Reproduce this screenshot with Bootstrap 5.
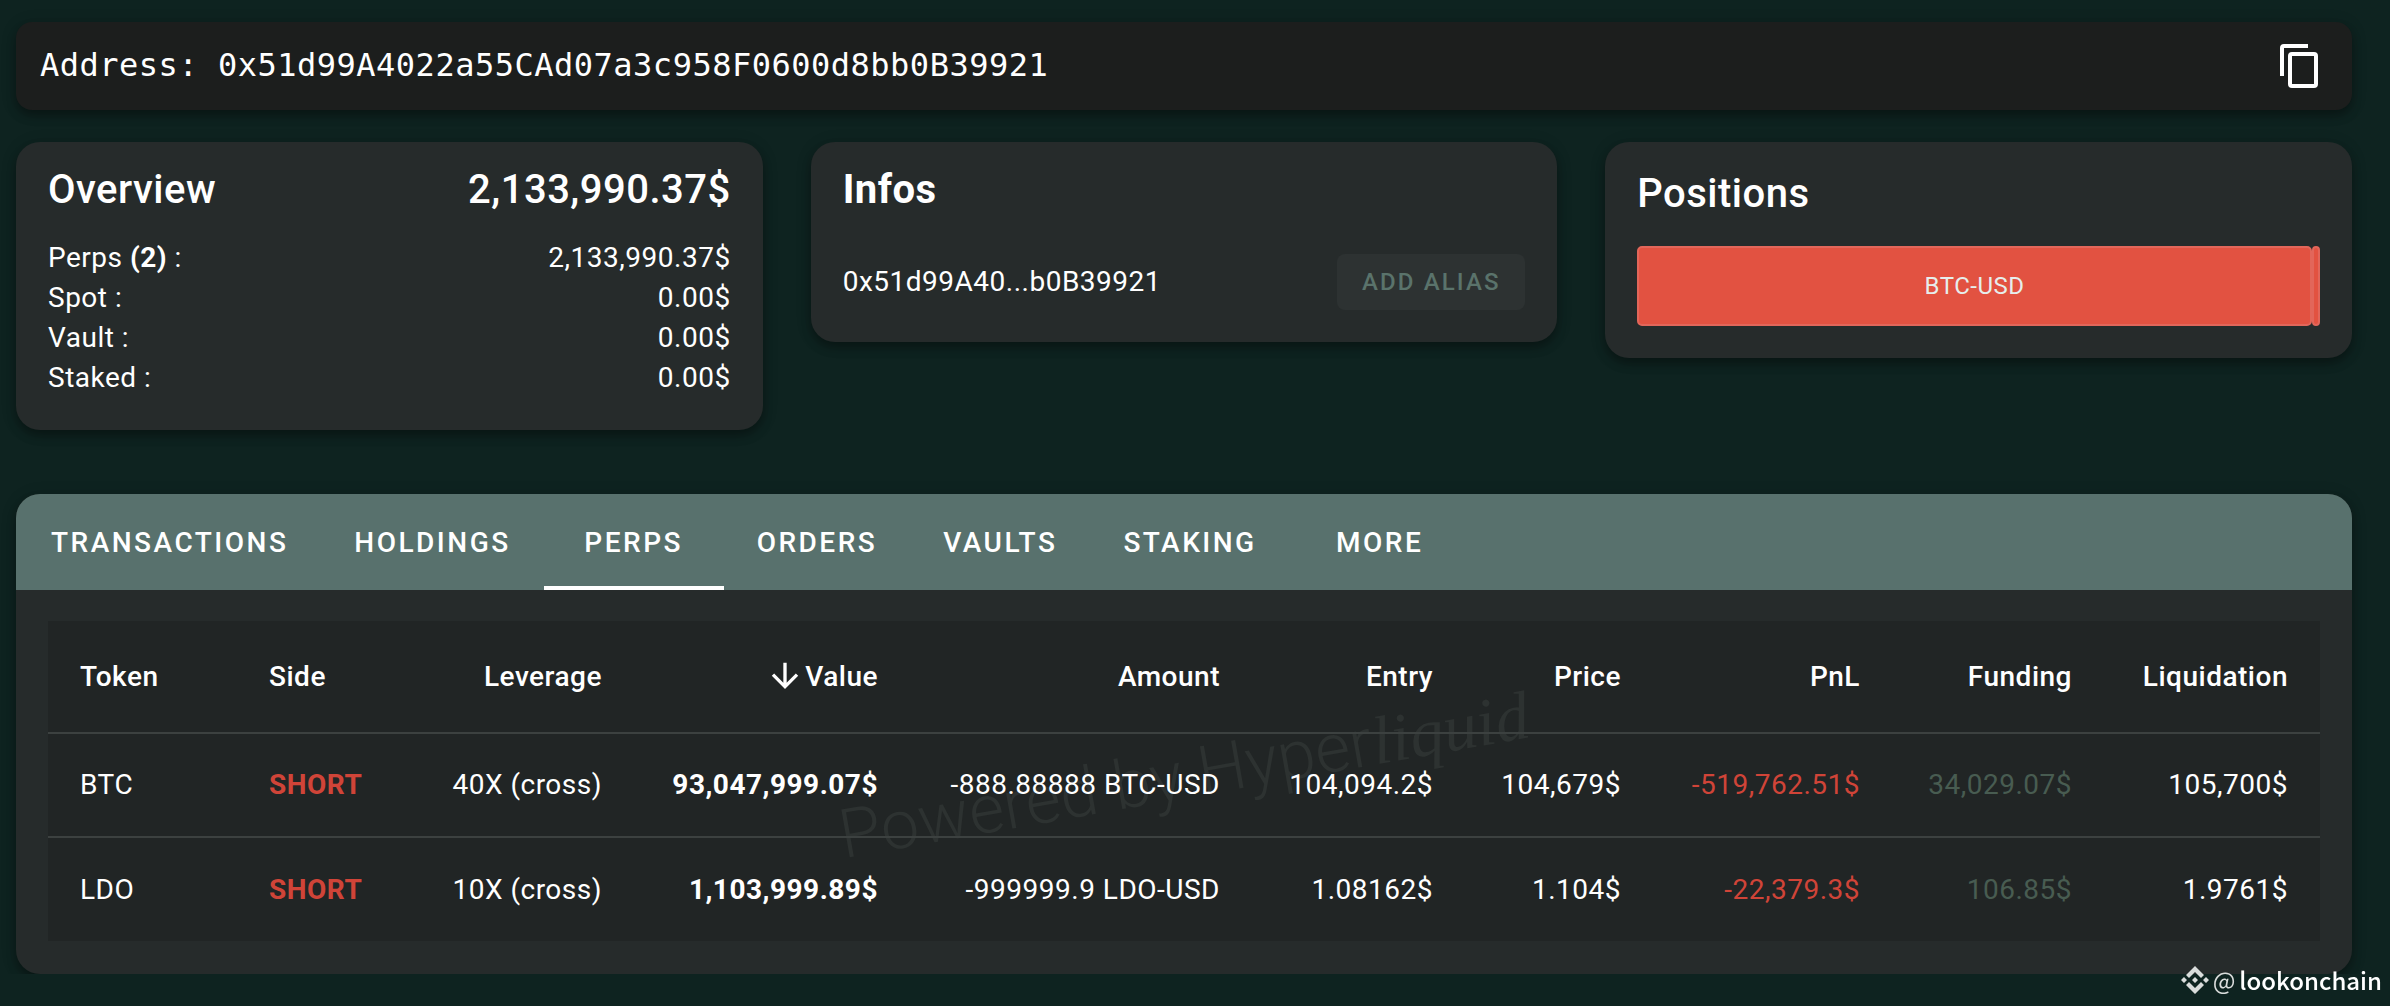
<!DOCTYPE html>
<html lang="en" data-bs-theme="dark">
<head>
<meta charset="utf-8">
<meta name="viewport" content="width=device-width, initial-scale=1">
<title>Address overview</title>
<link href="https://cdn.jsdelivr.net/npm/bootstrap@5.3.0/dist/css/bootstrap.min.css" rel="stylesheet">
<style>
  body { background: #0e2320; color: #fff; font-family: Roboto, "Liberation Sans", sans-serif; font-size: 28px; line-height: 40px; letter-spacing: .018em; }
  .page { padding: 22px 38px 0 16px; }
  .raised { box-shadow: 0 6px 10px rgba(0,0,0,.28), 0 2px 16px rgba(0,0,0,.16); }
  .address-bar { background: #1c1e1d; border-radius: 16px; height: 88px; padding: 0 28px 0 24px; margin-bottom: 32px; }
  .address-text { font-family: "DejaVu Sans Mono", monospace; font-size: 32px; padding-bottom: 2px; }
  .copy-btn { color: #fff; line-height: 1; }
  .icon-48 { width: 48px; height: 48px; }
  .summary { display: grid; grid-template-columns: repeat(3, 1fr); gap: 48px; align-items: start; min-height: 352px; }
  .panel { background: #262b2b; border-radius: 24px; }
  .tile { padding: 16px 32px 32px; }
  .tile-title { font-size: 40px; line-height: 64px; letter-spacing: .012em; font-weight: 500; margin: 0; }
  .alias-btn { background: #2d3232; color: #5a736b; border: 0; border-radius: 8px; height: 56px; width: 188px; font-size: 24px; font-weight: 500; letter-spacing: .089em; padding: 0; }
  .pos-bar { height: 80px; margin-top: 20px; }
  .pos-part { background: #e25241; border: 2px solid #e2665a; border-radius: 5px; font-size: 24px; color: #e6eeec; min-width: 0; overflow: hidden; }
  .tabs { background: #58716d; border-radius: 24px 24px 0 0; flex-wrap: nowrap; padding-left: 2px; }
  .tabs .nav-link { color: #fff; height: 96px; min-width: 180px; padding: 0 33px; font-weight: 500; letter-spacing: .089em; line-height: 98px; text-align: center; border-bottom: 4px solid transparent; border-radius: 0; }
  .tabs .nav-link.active { border-bottom-color: #fff; }
  .table-area { padding: 31px 32px 33px; }
  .table-box { background: #212525; }
  .positions { width: 100%; table-layout: fixed; position: relative; }
  .positions th, .positions td { padding: 0 32px; white-space: nowrap; text-align: right; }
  .positions th { font-weight: 500; height: 112px; }
  .positions td { height: 104px; }
  .positions thead th, .positions tbody tr:first-child td { border-bottom: 2px solid #3c4140; }
  .positions th:nth-child(-n+2), .positions td:nth-child(-n+2) { text-align: left; }
  .w-token { width: 189px; } .w-side { width: 156px; } .w-lev { width: 241px; } .w-value { width: 276px; } .w-amount { width: 342px; }
  .w-entry { width: 213px; } .w-price { width: 188px; } .w-pnl { width: 239px; } .w-fund { width: 212px; } .w-liq { width: 216px; }
  .loss { color: #d04438; }
  .gain { color: #485c51; }
  .sort-icon { width: 40px; height: 40px; margin: -4px 0 0 -8px; }
  .powered { left: 50%; top: 48%; transform: translate(-50%,-50%) rotate(-10deg); font-size: 68px; line-height: 80px; font-weight: 300; letter-spacing: 0; color: #2d3231; white-space: nowrap; pointer-events: none; }
  .powered em { font-family: "Liberation Serif", serif; }
  .credit { right: 8px; bottom: 8px; font-family: "Noto Sans CJK SC", sans-serif; font-size: 24px; line-height: 36px; letter-spacing: 0; font-weight: 500; }
  .credit-at { color: #d9dcdb; font-weight: 400; }
</style>
<script src="https://cdn.jsdelivr.net/npm/bootstrap@5.3.0/dist/js/bootstrap.bundle.min.js"></script>
</head>
<body>
<main class="page">
  <header class="address-bar raised d-flex align-items-center justify-content-between">
    <span class="address-text">Address: 0x51d99A4022a55CAd07a3c958F0600d8bb0B39921</span>
    <button type="button" class="btn copy-btn p-0 border-0" aria-label="Copy address">
      <svg class="icon-48" viewBox="0 0 24 24" fill="currentColor"><path d="M19,21H8V7H19M19,5H8A2,2 0 0,0 6,7V21A2,2 0 0,0 8,23H19A2,2 0 0,0 21,21V7A2,2 0 0,0 19,5M16,1H4A2,2 0 0,0 2,3V17H4V3H16V1Z"/></svg>
    </button>
  </header>

  <div class="summary">
    <section class="panel raised tile">
      <div class="d-flex justify-content-between mb-3">
        <h2 class="tile-title">Overview</h2><span class="tile-title">2,133,990.37$</span>
      </div>
      <div class="d-flex justify-content-between"><span>Perps <b>(2)</b> :</span><span>2,133,990.37$</span></div>
      <div class="d-flex justify-content-between"><span>Spot :</span><span>0.00$</span></div>
      <div class="d-flex justify-content-between"><span>Vault :</span><span>0.00$</span></div>
      <div class="d-flex justify-content-between"><span>Staked :</span><span>0.00$</span></div>
    </section>
    <section class="panel raised tile">
      <h2 class="tile-title fw-bold">Infos</h2>
      <div class="d-flex align-items-center justify-content-between mt-3 pt-3">
        <span>0x51d99A40...b0B39921</span>
        <button type="button" class="btn alias-btn">ADD ALIAS</button>
      </div>
    </section>
    <section class="panel raised tile">
      <h2 class="tile-title mt-1">Positions</h2>
      <div class="pos-bar d-flex">
        <div class="pos-part d-flex align-items-center justify-content-center" style="width: 98.8%">BTC-USD</div>
        <div class="pos-part" style="width: 1.2%"></div>
      </div>
    </section>
  </div>

  <section class="panel raised">
    <nav class="nav tabs">
      <a class="nav-link" href="#">TRANSACTIONS</a>
      <a class="nav-link" href="#">HOLDINGS</a>
      <a class="nav-link active" aria-current="page" href="#">PERPS</a>
      <a class="nav-link" href="#">ORDERS</a>
      <a class="nav-link" href="#">VAULTS</a>
      <a class="nav-link" href="#">STAKING</a>
      <a class="nav-link" href="#">MORE</a>
    </nav>
    <div class="table-area">
      <div class="table-box position-relative">
        <div class="powered position-absolute">Powered by Hyper<em>liquid</em></div>
        <table class="positions">
          <colgroup><col class="w-token"><col class="w-side"><col class="w-lev"><col class="w-value"><col class="w-amount"><col class="w-entry"><col class="w-price"><col class="w-pnl"><col class="w-fund"><col class="w-liq"></colgroup>
          <thead>
            <tr><th>Token</th><th>Side</th><th>Leverage</th><th><svg class="sort-icon" viewBox="0 0 24 24" fill="currentColor"><path d="M11,4H13V16L18.5,10.5L19.92,11.92L12,19.84L4.08,11.92L5.5,10.5L11,16V4Z"/></svg>Value</th><th>Amount</th><th>Entry</th><th>Price</th><th>PnL</th><th>Funding</th><th>Liquidation</th></tr>
          </thead>
          <tbody>
            <tr><td>BTC</td><td class="loss fw-bold">SHORT</td><td>40X (cross)</td><td class="fw-bold">93,047,999.07$</td><td>-888.88888 BTC-USD</td><td>104,094.2$</td><td>104,679$</td><td class="loss">-519,762.51$</td><td class="gain">34,029.07$</td><td>105,700$</td></tr>
            <tr><td>LDO</td><td class="loss fw-bold">SHORT</td><td>10X (cross)</td><td class="fw-bold">1,103,999.89$</td><td>-999999.9 LDO-USD</td><td>1.08162$</td><td>1.104$</td><td class="loss">-22,379.3$</td><td class="gain">106.85$</td><td>1.9761$</td></tr>
          </tbody>
        </table>
      </div>
    </div>
  </section>
</main>
<div class="credit position-fixed d-flex align-items-center">
  <svg width="28" height="28" viewBox="0 0 28 28" fill="#d9dcdb"><path d="M14 0l9 9-3 3-6-6-6 6-3-3zM14 28l9-9-3-3-6 6-6-6-3 3zM3 11l3 3-3 3-3-3zM25 11l3 3-3 3-3-3zM14 11l3 3-3 3-3-3z"/></svg>
  <span class="credit-at ms-1 me-1">@</span><span>lookonchain</span>
</div>
</body>
</html>
